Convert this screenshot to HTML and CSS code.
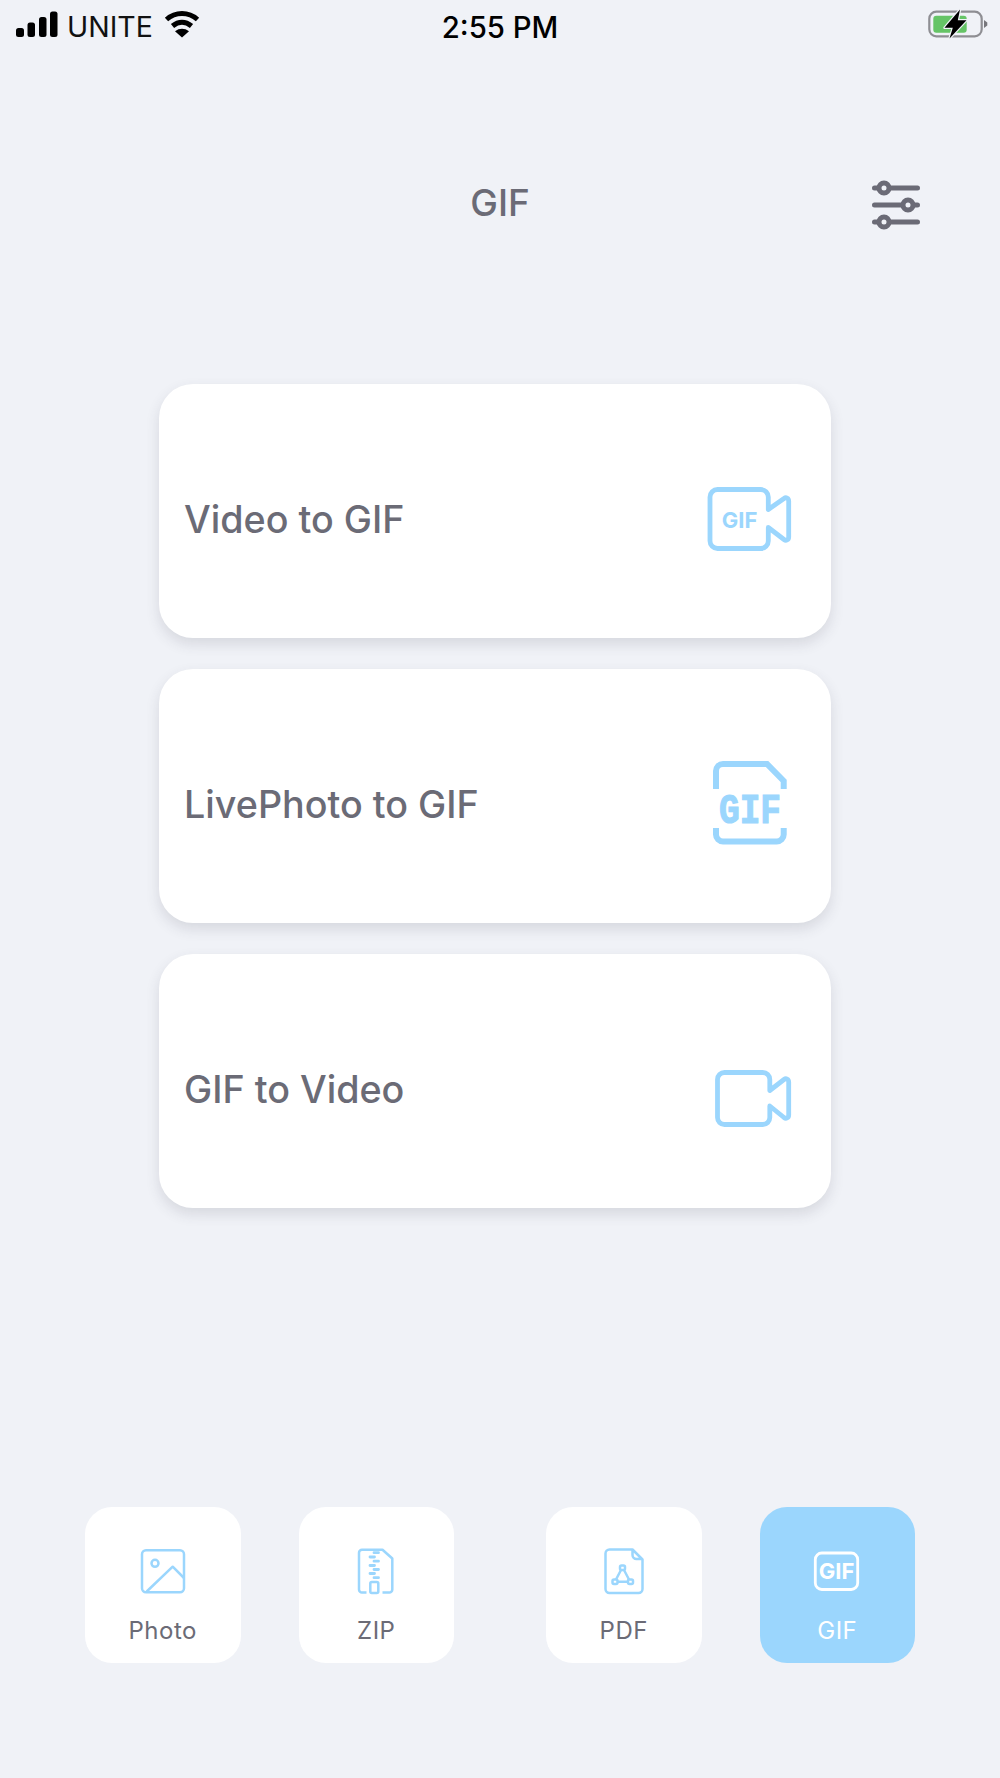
FILE: index.html
```html
<!DOCTYPE html>
<html lang="en">
<head>
<meta charset="utf-8">
<title>GIF</title>
<link rel="stylesheet" href="styles.css">
</head>
<body>
<div class="screen">
  <div class="status">
    <div class="status-left">
      <svg class="ic-signal" viewBox="14 8 46 32" width="46" height="32"><rect x="16" y="28" width="8" height="9" rx="2.5"/><rect x="27.5" y="22.5" width="7.5" height="14.5" rx="2.5"/><rect x="39" y="17" width="7.5" height="20" rx="2.5"/><rect x="50" y="11.5" width="7.5" height="25.5" rx="2.5"/></svg>
      <span class="carrier">UNITE</span>
      <svg class="ic-wifi" viewBox="160 6 44 34" width="44" height="34"><path class="wifi-arc" d="M166.5 19.5C175.5 11.5 188.5 11.5 197.500 19.5"/><path class="wifi-arc" d="M172.500 26C178.500 21 185.500 21 191.500 26"/><path d="M175 31.300C179.500 28 184.500 28 189 31.300L182 37.500Z"/></svg>
    </div>
    <div class="time">2:55 PM</div>
    <div class="status-right">
      <svg class="ic-battery" viewBox="925 6 66 36" width="66" height="36"><rect class="bat-shell" x="929.300" y="11.700" width="52.400" height="24.600" rx="7"/><rect class="bat-fill" x="933.300" y="15.700" width="33.400" height="17" rx="3"/><path class="bat-nub" d="M984 20L987.300 22.500V25.500L984 28Z"/><path class="bat-bolt" d="M960 9.500L944.500 27.800H952.800L949.500 38.500L966.500 20.200H957.800Z"/></svg>
    </div>
  </div>

  <header class="topbar">
    <span></span>
    <h1 class="title">GIF</h1>
    <svg class="ic-settings" viewBox="866 173 60 60" width="60" height="60">
      <path class="set-line" d="M874.500 188H917.500M874.500 205H917.500M874.500 222H917.500"/>
      <circle class="set-knob" cx="884" cy="188" r="5"/><circle class="set-knob" cx="908" cy="205" r="5"/><circle class="set-knob" cx="884" cy="222" r="5"/>
    </svg>
  </header>

  <main class="cards">
    <div class="card">
      <span class="card-label">Video to GIF</span>
      <svg class="card-icon" viewBox="701 461 110 100" width="110" height="100">
        <path class="blue-line thick" d="M768.300 509.500V497A7.500 7.500 0 0 0 760.800 489.500H717.500A7.500 7.500 0 0 0 710 497V541A7.500 7.500 0 0 0 717.500 548.500H760.800A7.500 7.500 0 0 0 768.300 541V527.500L784 539.500C786 541 788.700 540 788.700 537V501C788.700 498 786 497 784 498.500Z"/>
        <text class="gif-text gif-video" x="739.500" y="528" text-anchor="middle">GIF</text>
      </svg>
    </div>
    <div class="card">
      <span class="card-label">LivePhoto to GIF</span>
      <svg class="card-icon" viewBox="701 746 110 100" width="110" height="100">
        <path class="blue-line file" d="M716 789V771A7 7 0 0 1 723 764H767L783.700 781V789M716 828V834.500A7 7 0 0 0 723 841.500H776.700A7 7 0 0 0 783.700 834.500V828"/>
        <text class="gif-mono" x="719" y="823.300" textLength="62" lengthAdjust="spacingAndGlyphs">GIF</text>
      </svg>
    </div>
    <div class="card">
      <span class="card-label">GIF to Video</span>
      <svg class="card-icon" viewBox="701 1031 110 100" width="110" height="100">
        <path class="blue-line thick" d="M769.800 1090.500V1079.500A7 7 0 0 0 762.800 1072.500H724.500A7 7 0 0 0 717.500 1079.500V1117.500A7 7 0 0 0 724.500 1124.500H762.800A7 7 0 0 0 769.800 1117.500V1106L784 1117.500C786 1119 788.700 1118 788.700 1115V1082C788.700 1079 786 1078 784 1079.500Z"/>
      </svg>
    </div>
  </main>

  <nav class="tabs">
    <div class="tab-group">
      <div class="tab">
        <svg class="tab-icon" viewBox="133 1541 60 60" width="60" height="60">
          <rect class="blue-line tab-line" x="142" y="1550.300" width="42" height="42" rx="4"/>
          <circle class="blue-line tab-line" cx="155" cy="1563.300" r="3.500"/>
          <path class="blue-line tab-line" d="M146.700 1591.500L172.700 1566.700L184 1578"/>
        </svg>
        <span class="tab-label">Photo</span>
      </div>
      <div class="tab">
        <svg class="tab-icon" viewBox="346.500 1541 60 60" width="60" height="60">
          <path class="blue-line tab-line" d="M367 1592.400H362.500A3 3 0 0 1 359.500 1589.400V1552.800A3 3 0 0 1 362.500 1549.800H383L392.800 1558.500V1589.400A3 3 0 0 1 389.800 1592.400H383"/>
          <rect class="blue-line tab-line" x="370.800" y="1582" width="8" height="11" rx="1.500"/>
          <path class="zip-teeth" d="M374.500 1552.700H379M370.500 1557H375M374.500 1561.200H379M370.500 1565.500H375M374.500 1569.500H379M370.500 1573.500H375M374.500 1577.700H379"/>
        </svg>
        <span class="tab-label">ZIP</span>
      </div>
    </div>
    <div class="tab-group">
      <div class="tab">
        <svg class="tab-icon" viewBox="593.500 1541 60 60" width="60" height="60">
          <path class="blue-line tab-line" d="M632 1549.500H609A4 4 0 0 0 605 1553.500V1589A4 4 0 0 0 609 1593H638A4 4 0 0 0 642 1589V1559.500ZM632 1549.500V1555A4 4 0 0 0 636 1559H642"/>
          <rect class="blue-line tab-line" x="619.500" y="1565.500" width="5" height="4.500" rx="1.500"/>
          <rect class="blue-line tab-line" x="612" y="1579.500" width="5" height="4.500" rx="1.500"/>
          <rect class="blue-line tab-line" x="627.500" y="1579.500" width="5" height="4.500" rx="1.500"/>
          <path class="blue-line tab-line" d="M620.500 1570L615.500 1579.500M623.500 1570L628.500 1579.500M617 1581.800H627.500"/>
        </svg>
        <span class="tab-label">PDF</span>
      </div>
      <div class="tab tab-active">
        <svg class="tab-icon" viewBox="807 1541 60 60" width="60" height="60">
          <rect class="white-line" x="815.300" y="1553" width="42.400" height="36.500" rx="6.500"/>
          <text class="gif-text gif-tab" x="836.500" y="1579" text-anchor="middle">GIF</text>
        </svg>
        <span class="tab-label">GIF</span>
      </div>
    </div>
  </nav>
</div>
</body>
</html>
```

FILE: styles.css
```css
* { box-sizing: border-box; }
html, body { margin: 0; padding: 0; }
body { background: #f0f2f7; font-family: Inter, "Noto Sans", sans-serif; color: #6b6b76; }
.screen { width: 1000px; height: 1778px; overflow: hidden; }

.status { height: 50px; display: grid; grid-template-columns: 1fr auto 1fr; align-items: start; }
.status-left { display: flex; align-items: flex-start; padding: 8px 0 0 14px; }
.ic-signal { display: block; fill: #000; }
.carrier { margin: 3px 0 0 7px; font-size: 28.500px; line-height: 32px; color: #111; width: 93px; }
.ic-wifi { display: block; margin-top: -2px; fill: #000; }
.wifi-arc { fill: none; stroke: #000; stroke-width: 5; }
.time { font-size: 29.300px; line-height: 32px; font-weight: 500; color: #000; margin-top: 12px; }
.status-right { display: flex; justify-content: flex-end; padding: 6px 9px 0 0; }
.ic-battery { display: block; }
.bat-shell { fill: none; stroke: #8e8e93; stroke-width: 2.200; }
.bat-fill { fill: #65c466; }
.bat-nub { fill: #77777c; }
.bat-bolt { fill: #000; stroke: #f0f2f7; stroke-width: 2.500; paint-order: stroke; stroke-linejoin: round; }

.topbar { display: grid; grid-template-columns: 1fr auto 1fr; align-items: center; padding: 123px 74px 0; }
.title { margin: 0; font-size: 37px; line-height: 60px; font-weight: 450; color: #6b6b76; }
.ic-settings { display: block; justify-self: end; }
.set-line { fill: none; stroke: #6b6b76; stroke-width: 5; stroke-linecap: round; }
.set-knob { fill: #f0f2f7; stroke: #6b6b76; stroke-width: 5; }

.cards { width: 672px; margin: 151px 0 0 159px; display: flex; flex-direction: column; gap: 31px; }
.card { height: 254px; background: #fff; border-radius: 34px; box-shadow: 0 6px 14px rgba(60, 60, 80, .14); display: flex; align-items: center; justify-content: space-between; padding: 0 20px 0 25px; }
.card-label { padding-top: 16px; font-size: 37.700px; line-height: 44px; font-weight: 450; color: #6b6b76; }
.card-icon { display: block; }

.blue-line { fill: none; stroke: #9bd6fd; stroke-linejoin: round; }
.thick { stroke-width: 4.800; }
.file { stroke-width: 6; stroke-linejoin: miter; }
.tab-line { stroke-width: 2.500; }
.zip-teeth { fill: none; stroke: #9bd6fd; stroke-width: 2.800; stroke-linecap: round; }
.white-line { fill: none; stroke: #fff; stroke-width: 2.800; }
.gif-text { font-family: Inter, sans-serif; font-weight: 700; }
.gif-video { font-size: 22px; fill: #9bd6fd; }
.gif-tab { font-size: 22px; fill: #fff; }
.gif-mono { font-family: "Liberation Mono", monospace; font-weight: 700; font-size: 43px; fill: #9bd6fd; stroke: #9bd6fd; stroke-width: 1.200; }

.tabs { display: flex; justify-content: space-between; margin-top: 299px; padding: 0 85px; }
.tab-group { display: flex; gap: 58px; }
.tab { width: 155.500px; height: 156px; background: #fff; border-radius: 27px; padding-top: 34px; display: flex; flex-direction: column; align-items: center; }
.tab-active { background: #9bd6fd; color: #fff; }
.tab-icon { display: block; }
.tab-label { margin-top: 15px; font-size: 24px; line-height: 30px; letter-spacing: .5px; color: #6b6b76; }
.tab-active .tab-label { color: #fff; }
```
